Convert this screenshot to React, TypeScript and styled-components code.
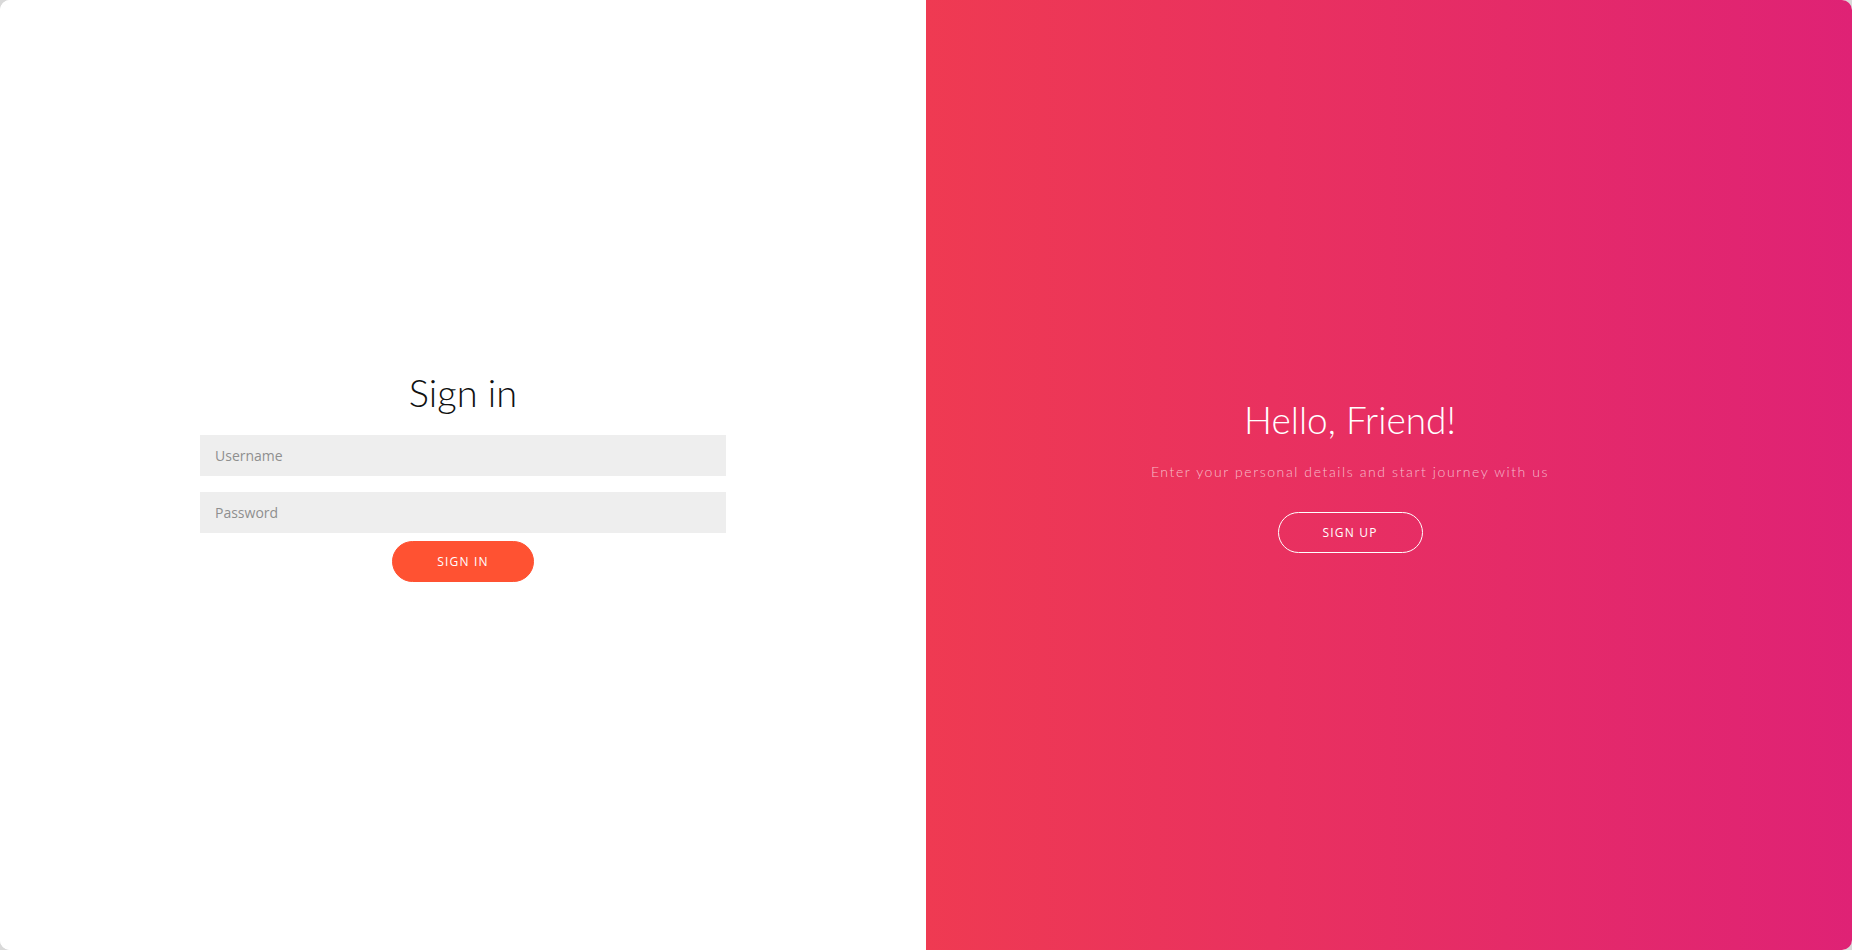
import React from "react";
import styled, { createGlobalStyle } from "styled-components";

const Global = createGlobalStyle`
  html, body { margin: 0; padding: 0; height: 100%; }
  body { background: #d9d9d9; font-family: "Open Sans", "Noto Sans", sans-serif; }
  #root { height: 100%; }
  * { box-sizing: border-box; }
`;

const Container = styled.div`
  display: grid;
  grid-template-columns: 926px 926px;
  width: 1852px;
  height: 950px;
  border-radius: 10px;
  overflow: hidden;
  background: #fff;
`;

const SignInPanel = styled.section`
  display: flex;
  align-items: center;
  justify-content: center;
  padding: 0 200px;
  background: #fff;
`;

const Form = styled.form`
  display: flex;
  flex-direction: column;
  align-items: center;
  width: 100%;
`;

const Title = styled.h1<{ $light?: boolean }>`
  margin: 0;
  font-family: "Lato", "Inter", sans-serif;
  font-weight: 300;
  font-size: ${(p) => (p.$light ? "37px" : "38px")};
  line-height: 46px;
  color: ${(p) => (p.$light ? "#fff" : "#111")};
`;

const Input = styled.input`
  width: 100%;
  height: 41px;
  border: none;
  outline: none;
  background: #eee;
  padding: 0 15px;
  font-family: "Open Sans", "Noto Sans", sans-serif;
  font-size: 14px;
  color: #333;
  &::placeholder { color: #8f8f8f; }
`;

const Fields = styled.div`
  display: flex;
  flex-direction: column;
  gap: 16px;
  width: 100%;
  margin-top: 20px;
`;

const Button = styled.button<{ $ghost?: boolean }>`
  height: 41px;
  width: ${(p) => (p.$ghost ? "145px" : "142px")};
  border-radius: 21px;
  border: 1px solid ${(p) => (p.$ghost ? "#fff" : "#ff5232")};
  background: ${(p) => (p.$ghost ? "transparent" : "#ff5232")};
  color: #fff;
  font-family: "Open Sans", "Noto Sans", sans-serif;
  font-size: 12px;
  letter-spacing: 1.2px;
  text-transform: uppercase;
  cursor: pointer;
`;

const SignInButton = styled(Button)`
  margin-top: 8px;
`;

const OverlayPanel = styled.section`
  display: flex;
  align-items: center;
  justify-content: flex-start;
  padding-left: 174px;
  background: linear-gradient(to right, #ef3a52, #df2275);
  color: #fff;
`;

const Welcome = styled.div`
  display: flex;
  flex-direction: column;
  align-items: center;
  width: 500px;
`;

const Text = styled.p`
  margin: 20px 0 32px;
  font-family: "Lato", "Inter", sans-serif;
  font-weight: 300;
  font-size: 14px;
  letter-spacing: 1.6px;
  color: rgba(255, 255, 255, 0.68);
`;

export default function App() {
  return (
    <>
      <Global />
      <Container>
        <SignInPanel>
          <Form onSubmit={(e) => e.preventDefault()}>
            <Title>Sign in</Title>
            <Fields>
              <Input type="text" placeholder="Username" />
              <Input type="password" placeholder="Password" />
            </Fields>
            <SignInButton type="submit">Sign In</SignInButton>
          </Form>
        </SignInPanel>
        <OverlayPanel>
          <Welcome>
            <Title $light>Hello, Friend!</Title>
            <Text>Enter your personal details and start journey with us</Text>
            <Button $ghost type="button">Sign Up</Button>
          </Welcome>
        </OverlayPanel>
      </Container>
    </>
  );
}
